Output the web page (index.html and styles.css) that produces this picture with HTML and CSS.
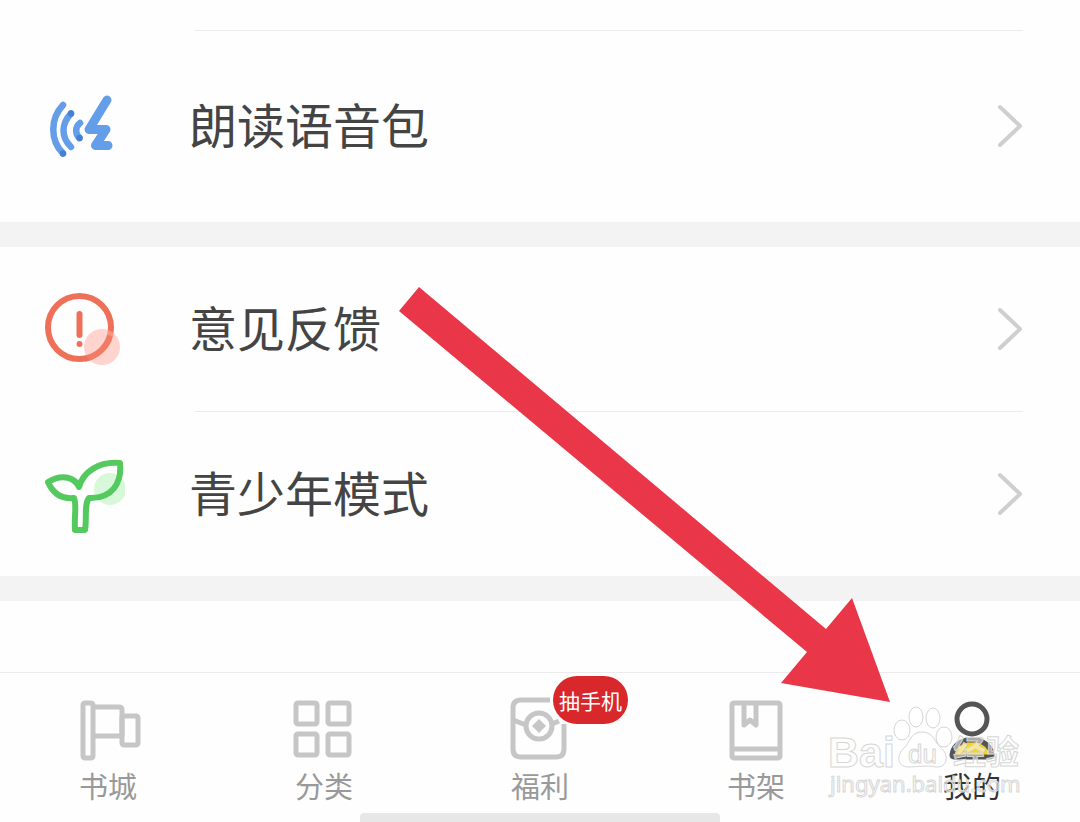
FILE: index.html
```html
<!DOCTYPE html>
<html lang="zh-CN">
<head>
<meta charset="utf-8">
<meta name="viewport" content="width=device-width, initial-scale=1">
<title>我的</title>
<link rel="stylesheet" href="styles.css">
</head>
<body>
<div class="page">
  <main class="content">
    <section class="group group-first">
      <a class="row row-tall" href="#voice">
        <svg class="row-icon" viewBox="0 0 90 90" fill="none" stroke-linecap="round" stroke-linejoin="round" aria-hidden="true">
          <g stroke="#649ee8" stroke-width="6.500">
            <path d="M28 24C15 38 15 59 28 72.500"/>
            <path d="M36 32.500C26 43 26 56 36 66"/>
            <path d="M45 42C40 46 40 53 44.500 57"/>
          </g>
          <path d="M72 19L54 48.500H71L60.500 64.500H73" stroke="#649ee8" stroke-width="9"/>
          <g fill="#4580d2"><circle cx="28" cy="72.500" r="3.200"/><circle cx="36" cy="32.500" r="3.200"/><circle cx="44.500" cy="57" r="3.200"/></g>
        </svg>
        <span class="row-label">朗读语音包</span>
        <svg class="chevron" viewBox="0 0 28 44" aria-hidden="true"><path d="M3 3L23 22L3 41"/></svg>
      </a>
    </section>
    <section class="group">
      <a class="row" href="#feedback">
        <svg class="row-icon" viewBox="0 0 90 90" fill="none" aria-hidden="true">
          <circle cx="44.500" cy="43.500" r="31.500" stroke="#ee7059" stroke-width="6"/>
          <path d="M44.500 30V51" stroke="#ee7059" stroke-width="6" stroke-linecap="round"/>
          <circle cx="44.500" cy="60" r="3" fill="#ee7059"/>
          <circle cx="67" cy="63" r="18" fill="#ffb0a5" fill-opacity=".55"/>
          <path d="M75 51.500A31.500 31.500 0 0 1 50 74.500" stroke="#ee7059" stroke-width="6" opacity=".7"/>
        </svg>
        <span class="row-label">意见反馈</span>
        <svg class="chevron" viewBox="0 0 28 44" aria-hidden="true"><path d="M3 3L23 22L3 41"/></svg>
      </a>
      <a class="row row-ruled" href="#teen">
        <svg class="row-icon" viewBox="0 0 90 90" fill="none" aria-hidden="true">
          <circle cx="75" cy="40" r="16" fill="#d8f9d9"/>
          <path d="M44 38C48 23 64 12 85 14C87 34 77 50 54 49C49 55 52 70 50 81H40C39 68 42 56 39 49C29 50 19 47 13 33C28 24 40 29 44 38Z" stroke="#54c95e" stroke-width="6" stroke-linejoin="round"/>
        </svg>
        <span class="row-label">青少年模式</span>
        <svg class="chevron" viewBox="0 0 28 44" aria-hidden="true"><path d="M3 3L23 22L3 41"/></svg>
      </a>
    </section>
  </main>

  <nav class="tabs" aria-label="主导航">
    <a class="tab" href="#store">
      <svg class="tab-icon" viewBox="0 0 64 64" aria-hidden="true">
        <rect x="7" y="5" width="10" height="55" rx="2"/>
        <path d="M18 9H43Q46 9 46 12V38M18 38H46"/>
        <rect x="46" y="18" width="16" height="29" rx="2"/>
      </svg>
      <span>书城</span>
    </a>
    <a class="tab" href="#category">
      <svg class="tab-icon" viewBox="0 0 64 64" aria-hidden="true">
        <rect x="4" y="5" width="21" height="21" rx="2"/><rect x="36" y="5" width="21" height="21" rx="2"/>
        <rect x="4" y="36" width="21" height="21" rx="2"/><rect x="36" y="36" width="21" height="21" rx="2"/>
      </svg>
      <span>分类</span>
    </a>
    <a class="tab" href="#welfare">
      <span class="icon-wrap">
        <svg class="tab-icon" viewBox="0 0 64 64" aria-hidden="true">
          <path d="M42 2H13Q5 2 5 10V51Q5 59 13 59H48Q56 59 56 51V26"/>
          <path d="M5 22L18 27M44 26L51 23"/>
          <circle cx="31" cy="28" r="13"/>
          <path class="coin" d="M31 21L38 28L31 35L24 28Z"/>
        </svg>
        <span class="badge">抽手机</span>
      </span>
      <span>福利</span>
    </a>
    <a class="tab" href="#shelf">
      <svg class="tab-icon" viewBox="0 0 64 64" aria-hidden="true">
        <rect x="8" y="5" width="48" height="55" rx="2"/>
        <path d="M8 51H56M20 5V27L26 22L32 27V5"/>
      </svg>
      <span>书架</span>
    </a>
    <a class="tab tab-active" href="#mine" aria-current="page">
      <svg class="tab-icon" viewBox="0 0 64 64" aria-hidden="true">
        <circle cx="32" cy="21" r="15"/>
        <path class="shoulders" d="M27 42H37C45 44 51 49 52 57Q52 59 49 59H15Q12 59 12 57C13 49 19 44 27 42Z"/>
      </svg>
      <span>我的</span>
    </a>
    <span class="home-bar"></span>
  </nav>

  <svg class="arrow" viewBox="0 0 494 418" aria-hidden="true"><path d="M20 1L427 343L453 312L491 416L382 397L408 366L0 25Z"/></svg>

  <svg class="watermark" viewBox="0 0 200 100" aria-hidden="true">
    <text class="wm-brand" x="-1" y="67">Bai</text>
    <ellipse cx="73" cy="30" rx="8" ry="10"/>
    <ellipse cx="87" cy="17" rx="7" ry="10"/>
    <ellipse cx="104" cy="18" rx="7" ry="10"/>
    <ellipse cx="115" cy="37" rx="8" ry="10"/>
    <path d="M93 32C81 32 81 43 75 48C68 54 67 66 79 67C87 67 99 65 107 67C119 68 120 54 112 48C105 42 105 32 93 32Z"/>
    <text class="wm-cjk" x="124" y="64">经验</text>
    <text class="wm-du" x="79" y="63">du</text>
    <text class="wm-url" x="1" y="92">jingyan.baidu.com</text>
  </svg>
</div>
</body>
</html>
```
FILE: styles.css
```css
* { box-sizing: border-box; }

body {
  margin: 0;
  background: #fefefe;
  color: #444;
  font-family: "Noto Sans CJK SC", sans-serif;
}

.page {
  position: relative;
  display: flex;
  flex-direction: column;
  min-height: 100vh;
  overflow: hidden;
}

.content { flex: 1; }

.group { border-bottom: 25px solid #f3f3f3; }
.group-first { padding-top: 30px; }

.row {
  position: relative;
  display: flex;
  align-items: center;
  height: 164px;
  padding: 0 55px 0 35px;
  color: inherit;
  text-decoration: none;
}
.row-tall { height: 192px; }
.row-ruled { height: 165px; }

.row-tall::before,
.row-ruled::before {
  content: "";
  position: absolute;
  top: 0;
  left: 195px;
  right: 57px;
  height: 1px;
  background: #ebebeb;
}

.row-icon { width: 90px; height: 90px; }

.row-label {
  flex: 1;
  margin-left: 64px;
  padding-bottom: 6px;
  font-size: 48px;
  line-height: 64px;
}

.chevron {
  width: 28px;
  height: 44px;
  fill: none;
  stroke: #cfcfcf;
  stroke-width: 4px;
  stroke-linecap: round;
  stroke-linejoin: round;
}

.tabs {
  position: relative;
  display: grid;
  grid-template-columns: repeat(5, 1fr);
  height: 150px;
  padding-top: 25px;
  border-top: 1px solid #ebebeb;
}

.tab {
  display: flex;
  flex-direction: column;
  align-items: center;
  color: #999;
  font-size: 29px;
  line-height: 40px;
  text-decoration: none;
}
.tab-active { color: #333; }

.icon-wrap { position: relative; display: flex; }

.tab-icon {
  display: block;
  width: 64px;
  height: 64px;
  margin-bottom: 3px;
  overflow: visible;
  fill: none;
  stroke: #c6c6c6;
  stroke-width: 5px;
  stroke-linejoin: round;
}
.coin { fill: #c6c6c6; stroke: none; }
.tab-active .tab-icon { stroke: #555; }
.tab-active .shoulders { fill: #f6d51f; }

.badge {
  position: absolute;
  top: -22px;
  left: 45px;
  padding: 0 6px;
  border-radius: 24px;
  background: #d8282b;
  color: #fff;
  font-size: 21px;
  line-height: 48px;
  white-space: nowrap;
}

.home-bar {
  position: absolute;
  bottom: 0;
  left: 50%;
  width: 360px;
  height: 9px;
  margin-left: -180px;
  border-radius: 4px 4px 0 0;
  background: #e7e7e7;
}

.arrow {
  position: absolute;
  top: 286px;
  left: 399px;
  width: 494px;
  height: 418px;
  fill: #e93648;
  pointer-events: none;
}

.watermark {
  position: absolute;
  right: 51px;
  bottom: 22px;
  width: 200px;
  height: 100px;
  overflow: visible;
  pointer-events: none;
  fill: #fff;
  fill-opacity: .5;
  stroke: #d6d6d6;
  stroke-width: 1px;
  font-family: "Liberation Sans", "Noto Sans CJK SC", sans-serif;
}
.wm-brand { font-size: 43px; font-weight: bold; }
.wm-cjk { font-size: 33px; font-weight: bold; }
.wm-du { font-size: 26px; }
.wm-url {
  font-family: "Noto Sans", sans-serif;
  font-size: 22px;
}
```
